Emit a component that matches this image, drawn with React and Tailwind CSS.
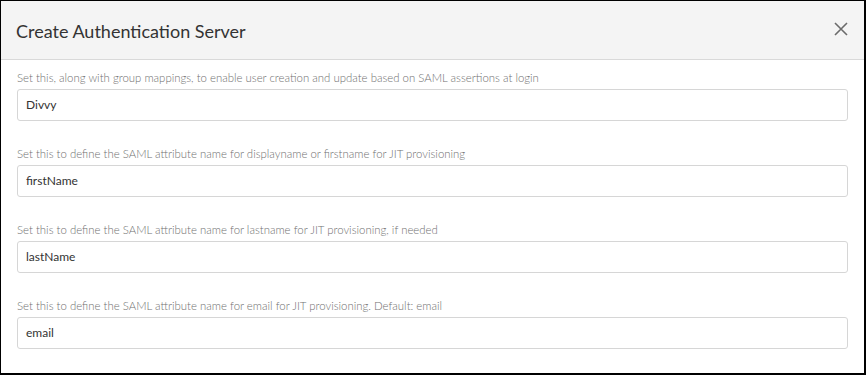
export default function App() {
  const fields = [
    {
      label:
        "Set this, along with group mappings, to enable user creation and update based on SAML assertions at login",
      value: "Divvy",
    },
    {
      label:
        "Set this to define the SAML attribute name for displayname or firstname for JIT provisioning",
      value: "firstName",
    },
    {
      label:
        "Set this to define the SAML attribute name for lastname for JIT provisioning, if needed",
      value: "lastName",
    },
    {
      label:
        "Set this to define the SAML attribute name for email for JIT provisioning. Default: email",
      value: "email",
    },
  ];
  return (
    <div
      className="w-[866px] h-[375px] bg-white border-l border-t border-r-2 border-b-2 border-black overflow-hidden flex flex-col"
      style={{ fontFamily: "Lato, 'Open Sans', sans-serif" }}
    >
      <div className="h-[59px] shrink-0 bg-[#f4f4f4] border-b border-[#d9d9d9] flex items-center justify-between pl-[15px] pr-[16px]">
        <div className="text-[18px] leading-[24px] text-[#333] pt-[1px]">
          Create Authentication Server
        </div>
        <svg
          width="14"
          height="14"
          viewBox="0 0 14 14"
          className="mt-[-2px]"
        >
          <path
            d="M1 1 L13 13 M13 1 L1 13"
            stroke="#6b6b6b"
            strokeWidth="1.6"
            fill="none"
          />
        </svg>
      </div>
      <div className="pt-[10px] px-[16px] flex flex-col">
        {fields.map((f, i) => (
          <div key={i} className="flex flex-col mb-[25px]">
            <div className="text-[11.4px] leading-[16px] font-light text-[#707070] mb-[3px]">
              {f.label}
            </div>
            <div className="h-[32px] border border-[#d6d6d6] rounded-[3px] flex items-center px-[8px] text-[12px] text-[#333]">
              {f.value}
            </div>
          </div>
        ))}
      </div>
    </div>
  );
}
